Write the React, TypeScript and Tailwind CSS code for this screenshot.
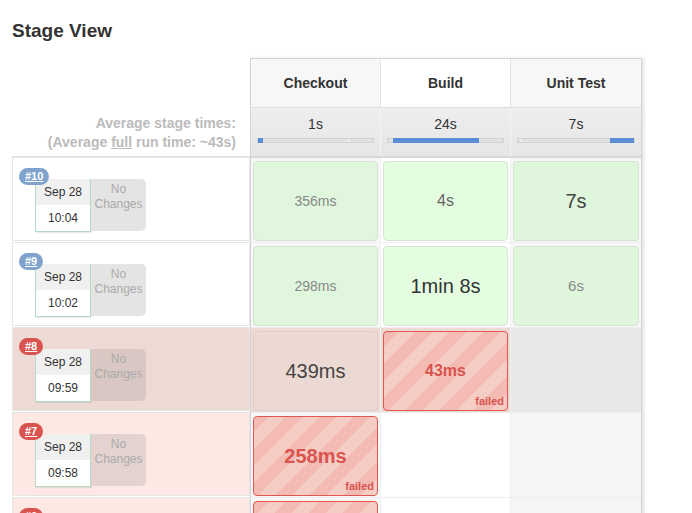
const FONT = { fontFamily: '"Liberation Sans", Arial, sans-serif' };

type Cell =
  | { kind: "ok"; text: string; cls: string }
  | { kind: "fail"; text: string; cls: string }
  | { kind: "plain"; text: string; cls: string }
  | { kind: "empty" };

type Row = {
  id: string;
  time: string;
  bg: string;
  badge: string;
  noch: string;
  colBg: string[];
  cells: Cell[];
};

const STAGES = [
  { name: "Checkout", avg: "1s", head: "bg-[#f7f7f7]", left: "left-0", width: "w-[4%]", tick: "left-[78%]" },
  { name: "Build", avg: "24s", head: "bg-white", left: "left-[4%]", width: "w-[75%]", tick: "" },
  { name: "Unit Test", avg: "7s", head: "bg-[#f7f7f7]", left: "left-[79%]", width: "w-[21%]", tick: "left-[2%]" },
];

const GREEN = ["bg-[#e0f6dd]", "bg-[#e4fde1]", "bg-[#dff6dc]"];

const ROWS: Row[] = [
  {
    id: "#10",
    time: "10:04",
    bg: "bg-white",
    badge: "bg-[#7fa3cc]",
    noch: "bg-[#e4e4e4]",
    colBg: ["bg-[#f7f7f7]", "bg-white", "bg-[#f7f7f7]"],
    cells: [
      { kind: "ok", text: "356ms", cls: "text-[14px] text-[#888]" },
      { kind: "ok", text: "4s", cls: "text-[16px] text-[#666]" },
      { kind: "ok", text: "7s", cls: "text-[20px] text-[#444]" },
    ],
  },
  {
    id: "#9",
    time: "10:02",
    bg: "bg-white",
    badge: "bg-[#7fa3cc]",
    noch: "bg-[#e4e4e4]",
    colBg: ["bg-[#f7f7f7]", "bg-white", "bg-[#f7f7f7]"],
    cells: [
      { kind: "ok", text: "298ms", cls: "text-[14px] text-[#888]" },
      { kind: "ok", text: "1min 8s", cls: "text-[20px] text-[#333]" },
      { kind: "ok", text: "6s", cls: "text-[15px] text-[#888]" },
    ],
  },
  {
    id: "#8",
    time: "09:59",
    bg: "bg-[#eedad5]",
    badge: "bg-[#d9534f]",
    noch: "bg-[#d9c7c3]",
    colBg: ["bg-[#eedad5]", "bg-[#eedad5]", "bg-[#e8e8e8]"],
    cells: [
      { kind: "plain", text: "439ms", cls: "text-[20px] text-[#444]" },
      { kind: "fail", text: "43ms", cls: "text-[16px]" },
      { kind: "empty" },
    ],
  },
  {
    id: "#7",
    time: "09:58",
    bg: "bg-[#fde8e3]",
    badge: "bg-[#d9534f]",
    noch: "bg-[#e3d2cf]",
    colBg: ["bg-[#f7f7f7]", "bg-white", "bg-[#f5f5f5]"],
    cells: [
      { kind: "fail", text: "258ms", cls: "text-[20px]" },
      { kind: "empty" },
      { kind: "empty" },
    ],
  },
  {
    id: "#6",
    time: "09:57",
    bg: "bg-[#fde8e3]",
    badge: "bg-[#d9534f]",
    noch: "bg-[#e3d2cf]",
    colBg: ["bg-[#f7f7f7]", "bg-white", "bg-[#f5f5f5]"],
    cells: [
      { kind: "fail", text: "31ms", cls: "text-[16px]" },
      { kind: "empty" },
      { kind: "empty" },
    ],
  },
];

function StageCell({ cell, col }: { cell: Cell; col: number }) {
  if (cell.kind === "empty") return <div className="h-full" />;
  if (cell.kind === "fail") {
    return (
      <div className="relative h-full rounded-[4px] border border-[#e2574f] bg-[repeating-linear-gradient(-45deg,#f6cdc5_0px,#f6cdc5_12px,#f3bbb4_12px,#f3bbb4_24px)] flex items-center justify-center">
        <span className={`font-bold text-[#d9534f] ${cell.cls}`}>{cell.text}</span>
        <span className="absolute right-[3px] bottom-[1px] text-[11px] font-bold text-[#d9534f]">failed</span>
      </div>
    );
  }
  if (cell.kind === "plain") {
    return (
      <div className="h-full rounded-[4px] border border-[#e2cfca] bg-[#ecd9d4] flex items-center justify-center">
        <span className={cell.cls}>{cell.text}</span>
      </div>
    );
  }
  return (
    <div className={`h-full rounded-[4px] border border-[#d6e4d3] ${GREEN[col]} flex items-center justify-center`}>
      <span className={cell.cls}>{cell.text}</span>
    </div>
  );
}

function BuildInfo({ row }: { row: Row }) {
  return (
    <div className={`relative h-[84px] mb-px border border-[#e6e6e6] ${row.bg}`}>
      <div className="absolute left-[22px] top-[21px] flex">
        <div className="w-[56px] h-[53px] border border-t-0 border-[#b3dcc5] shadow-[1px_1px_1px_rgba(0,0,0,0.08)] text-[12px] text-[#333]">
          <div className="h-[26px] bg-[#f0f0f0] flex items-center justify-center">Sep 28</div>
          <div className="h-[26px] bg-white flex items-center justify-center">{row.time}</div>
        </div>
        <div className={`w-[55px] h-[52px] rounded-r-[5px] ${row.noch} text-[12px] leading-[15px] text-[#aaa] text-center pt-[3px]`}>
          No
          <br />
          Changes
        </div>
      </div>
      <span
        className={`absolute left-[6px] top-[10px] h-[17px] px-[6px] rounded-full ${row.badge} text-white text-[11px] font-bold underline leading-[17px]`}
      >
        {row.id}
      </span>
    </div>
  );
}

export default function App() {
  return (
    <div className="bg-white w-[692px] h-[513px] overflow-hidden text-[#333]" style={FONT}>
      <h2 className="pl-[12px] pt-[19px] text-[19px] font-bold leading-[24px] text-[#333]">Stage View</h2>

      <div className="flex mt-[15px] pl-[12px]">
        {/* left column */}
        <div className="w-[238px] shrink-0">
          <div className="h-[48px]" />
          <div className="h-[51px] pr-[14px] pt-[8px] text-right text-[14px] font-bold leading-[19px] text-[#bbb] border-b border-[#e2e2e2]">
            <div>Average stage times:</div>
            <div>
              (Average <span className="underline">full</span> run time: ~43s)
            </div>
          </div>
          {ROWS.map((r) => (
            <BuildInfo key={r.id} row={r} />
          ))}
        </div>

        {/* stage table */}
        <div className="w-[392px] shrink-0 border-l border-r border-t border-[#d4d4d4] shadow-[2px_0_3px_rgba(0,0,0,0.12)]">
          <div className="grid grid-cols-[130px_130px_130px] h-[48px]">
            {STAGES.map((s) => (
              <div
                key={s.name}
                className={`${s.head} border-r border-[#e4e4e4] last:border-r-0 flex items-center justify-center text-[14px] font-bold text-[#333]`}
              >
                {s.name}
              </div>
            ))}
          </div>
          <div className="grid grid-cols-[130px_130px_130px] h-[51px] border-t border-[#dedede] border-b-2 border-b-[#d8d8d8]">
            {STAGES.map((s) => (
              <div
                key={s.name}
                className="bg-[linear-gradient(#eeeeee,#e6e6e6)] border-r border-[#f4f4f4] last:border-r-0 pt-[7px] px-[6px]"
              >
                <div className="text-center text-[14px] leading-[18px] text-[#333]">{s.avg}</div>
                <div className="relative mt-[5px] h-[5px] bg-[#e2e2e2] border border-[#d2d2d2]">
                  {s.tick && <div className={`absolute top-0 h-full w-[2px] bg-[#eeeeee] ${s.tick}`} />}
                  <div className={`absolute top-[-1px] h-[5px] bg-[#5b8ed6] ${s.left} ${s.width}`} />
                </div>
              </div>
            ))}
          </div>
          {ROWS.map((r) => (
            <div key={r.id} className="grid grid-cols-[130px_130px_130px] h-[85px] border-b border-[#eeeeee]">
              {r.cells.map((c, i) => (
                <div
                  key={i}
                  className={`${r.colBg[i]} border-r border-[#f0f0f0] last:border-r-0 pt-[3px] pb-px px-[2px]`}
                >
                  <StageCell cell={c} col={i} />
                </div>
              ))}
            </div>
          ))}
        </div>
      </div>
    </div>
  );
}
